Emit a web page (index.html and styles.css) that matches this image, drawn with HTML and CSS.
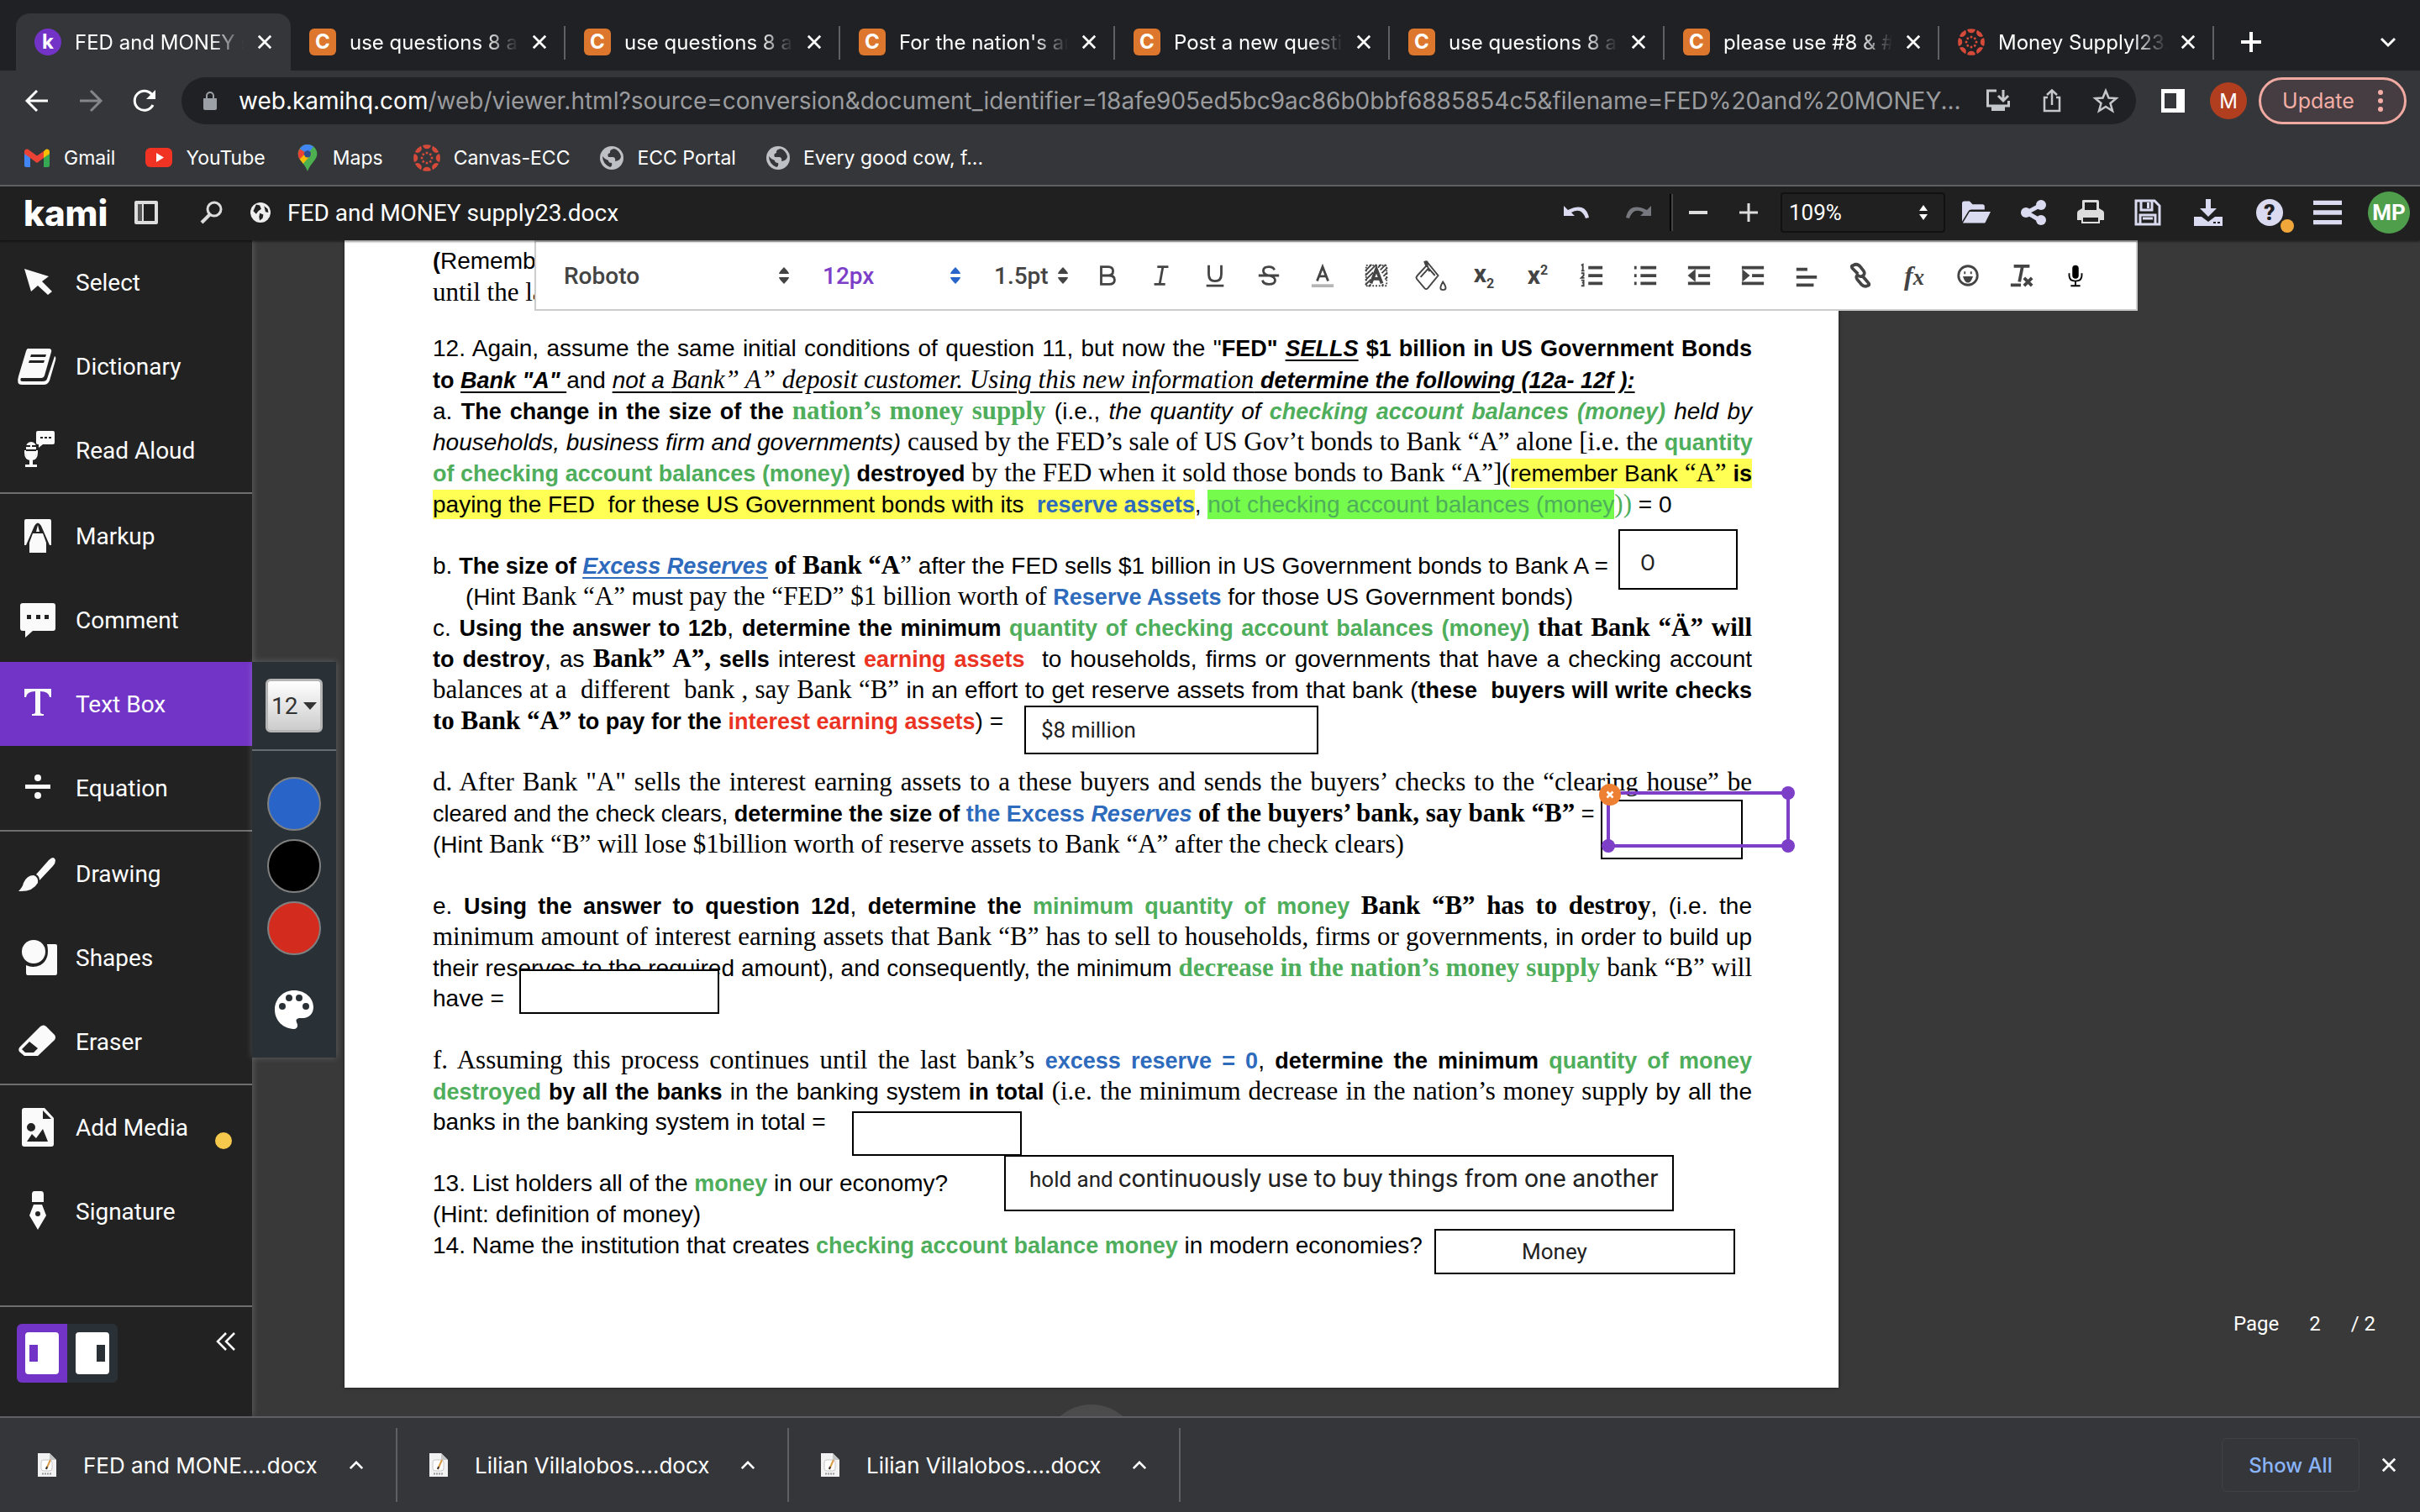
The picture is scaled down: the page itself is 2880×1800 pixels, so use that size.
FILE: index.html
```html
<!DOCTYPE html>
<html lang="en">
<head>
  <meta charset="UTF-8" />
  <meta name="viewport" content="width=device-width, initial-scale=1.0" />
  <title>FED and MONEY supply23.docx</title>
  <link rel="stylesheet" href="styles.css">
</head>

<body>

<!-- Shared icons -->
<svg class="icon-defs" aria-hidden="true">
  <symbol id="i-close" viewBox="0 0 20 20"><path d="M2 2L18 18M18 2L2 18" fill="none" stroke="currentColor" stroke-width="3"/></symbol>
  <symbol id="i-up" viewBox="0 0 20 12"><path d="M2 10L10 2L18 10" fill="none" stroke="currentColor" stroke-width="3"/></symbol>
  <symbol id="i-arrows" viewBox="0 0 12 20"><path d="M0 8Q0 6 6 0Q12 6 12 8ZM0 12H12Q12 14 6 20Q0 14 0 12Z" fill="currentColor"/></symbol>
  <symbol id="i-canvas" viewBox="0 0 32 32">
    <g fill="#d64a3a">
      <g id="petals"><path d="M11 1A15.500 15.500 0 0 1 21 1A5.200 5.800 0 0 1 11 1Z"/><circle cx="16" cy="10" r="1.500"/></g>
      <use href="#petals" transform="rotate(45 16 16)"/><use href="#petals" transform="rotate(90 16 16)"/>
      <use href="#petals" transform="rotate(135 16 16)"/><use href="#petals" transform="rotate(180 16 16)"/>
      <use href="#petals" transform="rotate(225 16 16)"/><use href="#petals" transform="rotate(270 16 16)"/>
      <use href="#petals" transform="rotate(315 16 16)"/>
    </g>
  </symbol>
  <symbol id="i-globe" viewBox="0 0 28 28">
    <circle cx="14" cy="14" r="14" fill="currentColor"/>
    <path d="M17 3Q11 4 12 8Q8 9 10 13H16Q19 14 18 18Q25 17 25 12Q23 5 17 3ZM3 12Q3 21 12 25Q15 24 14 20Q10 20 10 17Q6 16 3 12Z" fill="#35363a"/>
  </symbol>
  <symbol id="i-docx" viewBox="0 0 22 28">
    <path d="M0 0H14L22 8V28H0Z" fill="#f2f2f2"/><path d="M14 0V8H22Z" fill="#c4c4c4"/>
    <rect x="4" y="8" width="13" height="13" rx="3" fill="#fff" stroke="#c8c8c8"/>
    <path d="M15 8L10 19" stroke="#d99b45" stroke-width="2"/><path d="M10 19L11 16" stroke="#333" stroke-width="2"/>
    <path d="M5 24.500H17" stroke="#999" stroke-width="2" stroke-dasharray="2 1"/>
  </symbol>
</svg>

<!-- Tab Strip -->
<div class="tab-strip" role="tablist">
  <div class="tab active" role="tab"><span class="fav kami">k</span><span class="tab-title">FED and MONEY supply</span><button aria-label="Close tab"><svg><use href="#i-close"/></svg></button></div>
  <div class="tab" role="tab"><span class="fav">C</span><span class="tab-title">use questions 8 and 9</span><button aria-label="Close tab"><svg><use href="#i-close"/></svg></button></div>
  <div class="tab" role="tab"><span class="fav">C</span><span class="tab-title">use questions 8 and 9</span><button aria-label="Close tab"><svg><use href="#i-close"/></svg></button></div>
  <div class="tab" role="tab"><span class="fav">C</span><span class="tab-title">For the nation's and</span><button aria-label="Close tab"><svg><use href="#i-close"/></svg></button></div>
  <div class="tab" role="tab"><span class="fav">C</span><span class="tab-title">Post a new question</span><button aria-label="Close tab"><svg><use href="#i-close"/></svg></button></div>
  <div class="tab" role="tab"><span class="fav">C</span><span class="tab-title">use questions 8 and 9</span><button aria-label="Close tab"><svg><use href="#i-close"/></svg></button></div>
  <div class="tab" role="tab"><span class="fav">C</span><span class="tab-title">please use #8 &amp; #9</span><button aria-label="Close tab"><svg><use href="#i-close"/></svg></button></div>
  <div class="tab" role="tab"><svg class="fav-svg"><use href="#i-canvas"/></svg><span class="tab-title">Money Supplyl23.d</span><button aria-label="Close tab"><svg><use href="#i-close"/></svg></button></div>
  <button class="new-tab" aria-label="New tab"><svg viewBox="0 0 24 24"><path d="M12 0V24M0 12H24" stroke="currentColor" stroke-width="4"/></svg></button>
  <button class="tab-search" aria-label="Search tabs"><svg viewBox="0 0 20 12"><path d="M2 2L10 10L18 2" fill="none" stroke="currentColor" stroke-width="3"/></svg></button>
</div>

<!-- Address Bar -->
<div class="nav-bar">
  <button aria-label="Back"><svg viewBox="0 0 28 28"><path d="M27 14H3M14 2L2 14L14 26" fill="none" stroke="#fff" stroke-width="3"/></svg></button>
  <button aria-label="Forward"><svg viewBox="0 0 28 28"><path d="M1 14H25M14 2L26 14L14 26" fill="none" stroke="#85868a" stroke-width="3"/></svg></button>
  <button aria-label="Reload"><svg viewBox="0 0 28 28"><path d="M24 19A11.500 11.500 0 1 1 23 7" fill="none" stroke="#fff" stroke-width="3"/><path d="M27 1V12H16Z" fill="#fff"/></svg></button>
  <div class="omnibox">
    <svg class="lock" viewBox="0 0 16 22"><path d="M0 8H16V20Q16 22 14 22H2Q0 22 0 20Z" fill="#9aa0a6"/><path d="M4 8V5A4 4 0 0 1 12 5V8" fill="none" stroke="#9aa0a6" stroke-width="2"/></svg>
    <label class="host" for="address">web.kamihq.com</label>
    <input id="address" type="text" value="/web/viewer.html?source=conversion&amp;document_identifier=18afe905ed5bc9ac86b0bbf6885854c5&amp;filename=FED%20and%20MONEY...">
    <button aria-label="Install"><svg viewBox="0 0 28 28"><path d="M12 2H1.500V20H26.500V14M20 1V13M14 8L20 14L26 8" fill="none" stroke="#c4c7cb" stroke-width="3"/><path d="M6 20H22V26H6Z" fill="#c4c7cb"/></svg></button>
    <button aria-label="Share"><svg viewBox="0 0 28 28"><path d="M9 10H5V26H23V10H19M14 19V2M8 7L14 1.500L20 7" fill="none" stroke="#c4c7cb" stroke-width="2.500"/></svg></button>
    <button aria-label="Bookmark"><svg viewBox="0 0 28 28"><path d="M14 2L17.500 10.500L26.500 11L19.500 17L22 26L14 21L6 26L8.500 17L1.500 11L10.500 10.500Z" fill="none" stroke="#c4c7cb" stroke-width="2.500"/></svg></button>
  </div>
  <button class="side-panel" aria-label="Side panel"><svg viewBox="0 0 28 28"><path fill-rule="evenodd" d="M0 0H28V28H0ZM4 5V23H18V5Z" fill="#fff"/></svg></button>
  <button class="profile">M</button>
  <button class="update">Update <svg viewBox="0 0 6 26"><circle cx="3" cy="3" r="3"/><circle cx="3" cy="13" r="3"/><circle cx="3" cy="23" r="3"/></svg></button>
</div>

<!-- Bookmarks -->
<nav class="bookmarks">
  <a href="#"><svg class="gmail" viewBox="0 0 30 22"><path d="M0 4V20Q0 22 2 22H7V7Z" fill="#4285f4"/><path d="M30 4V20Q30 22 28 22H23V7Z" fill="#34a853"/><path d="M23 3L26 0.500Q30 0 30 4V6L23 11Z" fill="#fbbc04"/><path d="M0 4Q0 0 4 0.500L15 8.500L23 3V11L15 17L7 11L0 6Z" fill="#ea4335"/></svg>Gmail</a>
  <a href="#"><svg viewBox="0 0 32 24"><rect width="32" height="23" rx="6" fill="#f03323"/><path d="M13 6V17L22 11.500Z" fill="#fff"/></svg>YouTube</a>
  <a href="#"><svg class="pin" viewBox="0 0 22 31"><path d="M11 0A11 11 0 0 1 22 11C22 18 14 22 11 31C8 22 0 18 0 11A11 11 0 0 1 11 0Z" fill="#4caf50"/><path d="M11 0A11 11 0 0 0 2 5L11 11L18 2.500A11 11 0 0 0 11 0Z" fill="#4285f4"/><path d="M2 5A11 11 0 0 0 2 17L11 11Z" fill="#ea4335"/><path d="M2 17L6 22L16 11H8Z" fill="#fbbc04"/><circle cx="11" cy="11" r="4" fill="#2c4d8f"/></svg>Maps</a>
  <a href="#"><svg viewBox="0 0 32 32"><use href="#i-canvas"/></svg>Canvas-ECC</a>
  <a href="#"><svg class="globe"><use href="#i-globe"/></svg>ECC Portal</a>
  <a href="#"><svg class="globe"><use href="#i-globe"/></svg>Every good cow, f...</a>
</nav>

<!-- Kami Header -->
<header class="kami-header">
  <span class="logo">kami</span>
  <button class="panel-btn" aria-label="Toggle panel"><svg viewBox="0 0 28 28"><path fill-rule="evenodd" d="M0 2Q0 0 2 0H26Q28 0 28 2V26Q28 28 26 28H2Q0 28 0 26ZM11 4V24H24V4Z" fill="#ddd"/><path d="M4 4H9V24H4Z" fill="#555"/></svg></button>
  <button class="search-btn" aria-label="Search"><svg viewBox="0 0 28 28"><circle cx="17" cy="10" r="8" fill="none" stroke="#ddd" stroke-width="3"/><path d="M12 16L2 26" stroke="#ddd" stroke-width="4"/></svg></button>
  <svg class="doc-globe" viewBox="0 0 28 28"><circle cx="14" cy="14" r="14" fill="#eee"/><path d="M8 3L13 4L15 9L11 12L8 16L4 12ZM13 15L18 17L17 22L13 25L12 20ZM19 5L24 9L25 14L21 13Z" fill="#222"/></svg>
  <h1>FED and MONEY supply23.docx</h1>
  <div class="kami-actions">
    <button class="undo" aria-label="Undo"><svg viewBox="0 0 32 20"><path d="M1 2V14H14L10 10Q22 3 27 17L31 16Q27 -3 6 7Z" fill="#dadaf0"/></svg></button>
    <button class="redo" aria-label="Redo"><svg viewBox="0 0 32 20"><path d="M31 2V14H18L22 10Q10 3 5 17L1 16Q5 -3 26 7Z" fill="#77777f"/></svg></button>
    <span class="header-rule"></span>
    <button class="zoom-btn" aria-label="Zoom out"><svg viewBox="0 0 22 22"><path d="M0 11H22" stroke="#ddd" stroke-width="4"/></svg></button>
    <button class="zoom-btn" aria-label="Zoom in"><svg viewBox="0 0 22 22"><path d="M0 11H22M11 0V22" stroke="#ddd" stroke-width="3"/></svg></button>
    <span class="zoom-select"><select aria-label="Zoom level"><option>109%</option></select><svg viewBox="0 0 12 20"><path d="M1 8L6 1L11 8ZM1 12H11L6 19Z" fill="#fff"/></svg></span>
    <button class="tool-btn" aria-label="Open"><svg viewBox="0 0 38 30"><path d="M0 3Q0 0 3 0H10L14 4H27Q30 4 30 7V11H12Q9 11 8 14L0 27Z" fill="#dadaf0"/><path d="M10 14H38L31 28Q30 29 29 29H1Z" fill="#dadaf0"/></svg></button>
    <button class="tool-btn" aria-label="Share"><svg viewBox="0 0 32 32"><path d="M25 7L8 16L25 26" fill="none" stroke="#dadaf0" stroke-width="5"/><circle cx="25" cy="7" r="6" fill="#dadaf0"/><circle cx="7" cy="16" r="6" fill="#dadaf0"/><circle cx="25" cy="25" r="6" fill="#dadaf0"/></svg></button>
    <button class="tool-btn" aria-label="Print"><svg viewBox="0 0 32 32"><path fill-rule="evenodd" d="M6 11V2Q6 1 8 1H24Q26 1 26 3V11L31 14Q32 15 32 17V25H27V29H5V25H0V17Q0 15 1 14ZM9 4V13H23V4ZM7 22V27H25V22Z" fill="#ddd"/></svg></button>
    <button class="tool-btn" aria-label="Save"><svg viewBox="0 0 32 32"><path d="M2 2H24L30 8V30H2ZM8 2V13H21V2M7 30V19H25V30M10 23H22" fill="none" stroke="#dadaf0" stroke-width="3"/><path d="M15 4H18V11H15Z" fill="#dadaf0"/></svg></button>
    <button class="tool-btn download" aria-label="Download"><svg viewBox="0 0 34 32"><path d="M14 0H20V11H27L17 21L7 11H14Z" fill="#dadaf0"/><path fill-rule="evenodd" d="M0 21H9L17 27L25 21H34V32H0ZM23 27V29H26V27ZM28 27V29H31V27Z" fill="#dadaf0"/></svg></button>
    <button class="tool-btn help" aria-label="Help"><span class="help-mark">?</span><span class="dot"></span></button>
    <button class="tool-btn" aria-label="Menu"><svg viewBox="0 0 32 28"><path d="M0 3H32M0 14H32M0 25H32" stroke="#dadaf0" stroke-width="5"/></svg></button>
    <button class="user">MP</button>
  </div>
</header>

<main class="workspace">

  <!-- Tool Sidebar -->
  <aside class="sidebar">
    <div class="tool-group">
      <button class="tool"><svg viewBox="0 0 50 50"><path d="M9 9L38 18L30 24L42 36L37 40L25 29L17 36Z"/></svg>Select</button>
      <button class="tool"><svg viewBox="0 0 50 50"><path fill-rule="evenodd" d="M13 4H38Q42 4 41 8L33 36Q32 39 29 39H5Q3 43 7 43H31Q35 43 36 40L45 13Q47 14 46 18L39 42Q37 47 32 47H6Q-1 47 2 37L11 7Q12 4 13 4ZM17 11L16 14H34L35 11ZM15 18L14 21H32L33 18Z"/></svg>Dictionary</button>
      <button class="tool"><svg viewBox="0 0 50 50"><path d="M25 2H43Q45 2 45 4V16Q45 18 43 18H31L26 22V18Q23 18 23 16V4Q23 2 25 2Z"/><rect x="11" y="15" width="12" height="21" rx="6"/><path d="M10 25V28Q10 36 17 36Q24 36 24 28V25" fill="none" stroke="#fafafa" stroke-width="2"/><path d="M15 36H19V42H24V45H10V42H15Z"/><path d="M11 20H16M18 20H23M11 25H23M28 10H31M33 10H36M38 10H41" stroke="#222" stroke-width="2"/></svg>Read Aloud</button>
    </div>
    <div class="tool-group">
      <button class="tool"><svg viewBox="0 0 50 50"><path d="M11 5H39Q41 5 41 7V36H39L29 13Q25 6 21 13L11 36H9V7Q9 5 11 5Z"/><path d="M19 22H31L35 33V45H15V33Z"/><path d="M23 20L25 12L27 20Z"/></svg>Markup</button>
      <button class="tool"><svg viewBox="0 0 50 50"><path fill-rule="evenodd" d="M7 5H43Q46 5 46 8V35Q46 38 43 38H19L10 46V38H7Q4 38 4 35V8Q4 5 7 5ZM12 19V24H17V19ZM23 19V24H28V19ZM33 19V24H38V19Z"/></svg>Comment</button>
      <button class="tool selected"><svg viewBox="0 0 50 50"><path d="M9 7H41V17H39Q38 10 28 10V35Q28 37 32 37V39H18V37Q22 37 22 35V10Q12 10 11 17H9Z"/></svg>Text Box</button>
      <button class="tool"><svg viewBox="0 0 50 50"><path d="M10 21H40V26H10Z"/><circle cx="25" cy="13" r="4"/><circle cx="25" cy="34" r="4"/></svg>Equation</button>
    </div>
    <div class="tool-group">
      <button class="tool"><svg viewBox="0 0 50 50"><path d="M23 26L38 9Q44 3 46 9Q46 13 43 16L27 33Q27 28 23 26ZM20 27Q26 29 25 36Q19 47 2 46Q7 41 8 36Q12 27 20 27Z"/></svg>Drawing</button>
      <button class="tool"><svg viewBox="0 0 50 50"><circle cx="20" cy="18" r="14"/><path d="M36 9H46Q48 9 48 11V43Q48 46 46 46H13Q11 46 11 43V34Q19 38 28 34Q40 27 36 9Z"/></svg>Shapes</button>
      <button class="tool"><svg viewBox="0 0 50 50"><path fill-rule="evenodd" d="M28 7Q32 4 35 7L45 17Q47 20 45 23L25 42H9L3 37Q1 34 4 31ZM15 25L6 34L10 38H20L25 33Z"/></svg>Eraser</button>
    </div>
    <div class="tool-group last">
      <button class="tool"><svg viewBox="0 0 50 50"><path fill-rule="evenodd" d="M9 2H33L44 14V45Q44 48 41 48H9Q6 48 6 45V5Q6 2 9 2ZM31 5V15H41ZM12 42H37L31 27L23 38L18 33ZM17 20A5 5 0 1 0 17 30A5 5 0 1 0 17 20Z"/></svg>Add Media<span class="media-dot"></span></button>
      <button class="tool"><svg viewBox="0 0 50 50"><path d="M21 1H29Q32 1 32 5V14H18V5Q18 1 21 1Z"/><path fill-rule="evenodd" d="M20 17H30L35 30L25 47L15 30ZM25 25A3 3 0 1 0 25 31A3 3 0 1 0 25 25Z"/></svg>Signature</button>
    </div>
    <div class="sidebar-foot">
      <div class="dock">
        <button class="dock-left on" aria-label="Dock left"><svg viewBox="0 0 40 50"><path fill-rule="evenodd" d="M4 0H36Q40 0 40 4V46Q40 50 36 50H4Q0 50 0 46V4Q0 0 4 0ZM5 15V35H15V15Z" fill="#fff"/></svg></button>
        <button class="dock-right" aria-label="Dock right"><svg viewBox="0 0 40 50"><path fill-rule="evenodd" d="M4 0H36Q40 0 40 4V46Q40 50 36 50H4Q0 50 0 46V4Q0 0 4 0ZM25 15V35H35V15Z" fill="#fff"/></svg></button>
      </div>
      <button class="collapse" aria-label="Collapse"><svg viewBox="0 0 22 22"><path d="M11 1L1 11L11 21M21 1L11 11L21 21" fill="none" stroke="#fff" stroke-width="2.500"/></svg></button>
    </div>
  </aside>

  <!-- Text Box Options -->
  <div class="options">
    <div class="size-row"><span class="size-select"><select aria-label="Text size"><option>12</option></select><svg viewBox="0 0 16 9"><path d="M0 0H16L8 9Z" fill="#333"/></svg></span></div>
    <div class="swatches">
      <button class="swatch blue-swatch" aria-label="Blue"></button>
      <button class="swatch black-swatch" aria-label="Black"></button>
      <button class="swatch red-swatch" aria-label="Red"></button>
    </div>
    <button class="palette" aria-label="More colours"><svg viewBox="0 0 46 46"><path fill-rule="evenodd" d="M23 0C36 0 46 9 46 20C46 28 40 33 34 33H29Q24 34 26 38Q29 44 24 46C10 46 0 36 0 23C0 10 10 0 23 0ZM9 15A4 4 0 1 0 9 23A4 4 0 1 0 9 15ZM17 5A4 4 0 1 0 17 13A4 4 0 1 0 17 5ZM29 5A4 4 0 1 0 29 13A4 4 0 1 0 29 5ZM37 15A4 4 0 1 0 37 23A4 4 0 1 0 37 15Z" fill="#fff"/></svg></button>
  </div>

  <!-- Document -->
  <div class="viewer">
    <article class="page">
      <p class="lead">
        <span class="line end"><b>(</b>Remember, this process continues</span>
        <span class="line end serif">until the last bank</span>
      </p>
      <p>
        <span class="line">12. Again, assume the same initial conditions of question 11, but now the "<b>FED" <i class="u">SELLS</i> $1 billion in US Government Bonds</b></span>
        <span class="line end"><b>to <i class="u">Bank "A" </i></b>and <i class="u">not a <span class="serif">Bank” A” deposit customer. Using this new information</span> <b>determine the following (12a- 12f ):</b></i></span>
        <span class="line">a. <b>The change in the size of the <span class="serif green">nation’s money supply</span></b> (i.e., <i>the quantity of <b class="green">checking account balances (money)</b> held by</i></span>
        <span class="line"><i>households, business firm and governments)</i> <span class="serif">caused by the FED’s sale of US Gov’t bonds to Bank “A” alone [i.e. the</span> <b class="green">quantity</b></span>
        <span class="line"><b><span class="green">of checking account balances (money)</span> destroyed</b> <span class="serif">by the FED when it sold those bonds to Bank “A”](</span><mark>remember Bank <span class="serif">“A”</span> <b>is</b></mark></span>
        <span class="line end"><mark>paying the FED&nbsp; for these US Government bonds with its&nbsp; <b class="blue">reserve assets</b></mark>, <mark class="lime">not checking account balances (money</mark><span class="serif green">))</span> = 0</span>
      </p>
      <p>
        <span class="line end">b. <b>The size of <i class="u blue">Excess Reserves</i> <span class="serif">of Bank “A</span></b><span class="serif">”</span> after the FED sells $1 billion in US Government bonds to Bank A =</span>
        <span class="line end indent">(Hint <span class="serif">Bank “A”</span> must <span class="serif">pay the “FED” $1 billion worth of</span> <b class="blue">Reserve Assets</b> for those US Government bonds)</span>
        <span class="line">c. <b>Using the answer to 12b</b>, <b>determine the minimum <span class="green">quantity of checking account balances (money)</span> <span class="serif">that Bank “Ä” will</span></b></span>
        <span class="line"><b>to destroy</b>, as <b><span class="serif">Bank” A”,</span> sells</b> interest <b class="red">earning assets</b>&nbsp; to households, firms or governments that have a checking account</span>
        <span class="line"><span class="serif">balances at a&nbsp; different&nbsp; bank , say Bank “B”</span> in an effort to get reserve assets from that bank (<b>these&nbsp; buyers will write checks</b></span>
        <span class="line end"><b><span class="serif">to Bank “A”</span> to pay for the <span class="red">interest earning assets</span></b>) =</span>
      </p>
      <p>
        <span class="line serif">d. After Bank "A" sells the interest earning assets to a these buyers and sends the buyers’ checks to the “clearing house” be</span>
        <span class="line end snug">cleared and the check clears, <b>determine the size of <span class="blue">the Excess <i>Reserves</i></span> <span class="serif">of the buyers’ bank, say bank “B”</span></b> =</span>
        <span class="line end">(Hint <span class="serif">Bank “B” will lose $1billion worth of reserve assets to Bank “A” after the check clears)</span></span>
      </p>
      <p>
        <span class="line">e. <b>Using the answer to question 12d</b>, <b>determine the <span class="green">minimum quantity of money</span> <span class="serif">Bank “B” has to destroy</span></b>, (i.e. the</span>
        <span class="line"><span class="serif">minimum amount of interest earning assets that Bank “B” has to sell to households, firms or gover</span>nments, in order to build up</span>
        <span class="line">their reserves to the required amount), and consequently, the minimum <b class="serif green">decrease in the nation’s money supply</b> <span class="serif">bank “B” will</span></span>
        <span class="line end">have =</span>
      </p>
      <p>
        <span class="line"><span class="serif">f. Assuming this process continues until the last bank’s</span> <b><span class="blue">excess reserve = 0</span></b>, <b>determine the minimum <span class="green">quantity of money</span></b></span>
        <span class="line"><b><span class="green">destroyed</span> by all the banks</b> in the banking system <b>in total</b> <span class="serif">(i.e. the minimum decrease in the nation’s money supp</span>ly by all the</span>
        <span class="line end">banks in the banking system in total =</span>
      </p>
      <p>
        <span class="line end">13. List holders all of the <b class="green">money</b> in our economy?</span>
        <span class="line end">(Hint: definition of money)</span>
        <span class="line end">14. Name the institution that creates <b class="green">checking account balance money</b> in modern economies?</span>
      </p>

      <!-- Annotations placed over the page -->
      <input class="answer answer-b" type="text" aria-label="Answer b" value="O">
      <input class="answer answer-c" type="text" aria-label="Answer c" value="$8 million">
      <input class="answer answer-d" type="text" aria-label="Answer d">
      <input class="answer answer-e" type="text" aria-label="Answer e">
      <input class="answer answer-f" type="text" aria-label="Answer f">
      <div class="answer answer-13"><label for="answer13">hold and</label><input id="answer13" type="text" value="continuously use to buy things from one another"></div>
      <input class="answer answer-14" type="text" aria-label="Answer 14" value="Money">
      <div class="selection"><span class="handle ne"></span><span class="handle sw"></span><span class="handle se"></span><button class="remove" aria-label="Delete"><svg viewBox="0 0 20 20"><path d="M3 3L17 17M17 3L3 17" stroke="#fff" stroke-width="5"/></svg></button></div>
    </article>
    <span class="page-knob"></span>
    <div class="page-count"><span>Page</span><span>2</span><span>/ 2</span></div>

    <!-- Format Toolbar -->
    <div class="format-bar">
      <span class="pick font-pick"><select aria-label="Font"><option>Roboto</option></select><svg><use href="#i-arrows"/></svg></span>
      <span class="pick size-pick"><select aria-label="Font size"><option>12px</option></select><svg><use href="#i-arrows"/></svg></span>
      <span class="pick line-pick"><select aria-label="Line width"><option>1.5pt</option></select><svg><use href="#i-arrows"/></svg></span>
      <button aria-label="Bold"><svg viewBox="0 0 32 32"><path d="M8 5H17Q23 5 23 10.500Q23 16 17 16H8ZM8 16H18Q25 16 25 21.500Q25 27 18 27H8Z"/></svg></button>
      <button aria-label="Italic"><svg viewBox="0 0 32 32"><path d="M11 5H25M7 27H21M18 5L14 27"/></svg></button>
      <button aria-label="Underline"><svg viewBox="0 0 32 32"><path d="M8 3V14Q8 23 16 23Q24 23 24 14V3M5 29H27"/></svg></button>
      <button aria-label="Strike"><svg viewBox="0 0 32 32"><path d="M23 9Q22 5 16 5Q9 5 9 10Q9 14 16 16Q24 18 24 22Q24 27 16 27Q9 27 8 22M3 16H29"/></svg></button>
      <button aria-label="Text colour"><svg viewBox="0 0 32 32"><path d="M9 23L16 5L23 23M11 17H21"/><path d="M2 29H30" stroke="#b5b5b5" stroke-width="4"/></svg></button>
      <button aria-label="Background colour"><svg viewBox="0 0 32 32"><path d="M3 3H29V29H3Z" stroke-width="2" stroke-dasharray="2 2"/><path d="M2 10L10 2M2 16L16 2M2 22L12 12M18 6L22 2M2 28L9 21M21 9L28 2M23 13L30 6M25 17L30 12M27 21L30 18M6 30L9 27M23 29L25 27" stroke-width="2"/><path d="M9 26L16 8L23 26M11 20H21" stroke-width="4"/></svg></button>
      <button aria-label="Fill"><svg class="big" viewBox="0 0 40 40"><path d="M13 3Q16 1 17 4L30 20L17 36Q15 38 13 36L3 24Q2 22 4 20L15 8ZM8 22L18 11L26 20M15 3L19 15M36 28Q43 38 36 38Q30 38 36 28Z" stroke-width="2"/></svg></button>
      <button aria-label="Subscript"><span class="script">x<sub>2</sub></span></button>
      <button aria-label="Superscript"><span class="script">x<sup>2</sup></span></button>
      <button aria-label="Numbered list"><svg viewBox="0 0 32 32"><path d="M12 6H30M12 16H30M12 26H30" stroke-width="4"/><path d="M3 3L5 2V10M3 10H7M3 13H6V16L3 19H7M3 22H6V25H4H6V29H3" stroke-width="2"/></svg></button>
      <button aria-label="Bullet list"><svg viewBox="0 0 32 32"><path d="M2 6H5M2 16H5M2 26H5M10 6H30M10 16H30M10 26H30" stroke-width="4"/></svg></button>
      <button aria-label="Outdent"><svg viewBox="0 0 32 32"><path d="M2 6H30M15 16H30M2 26H30" stroke-width="4"/><path d="M10 11L4 16L10 21Z" fill="#444"/></svg></button>
      <button aria-label="Indent"><svg viewBox="0 0 32 32"><path d="M2 6H30M15 16H30M2 26H30" stroke-width="4"/><path d="M4 11L10 16L4 21Z" fill="#444"/></svg></button>
      <button aria-label="Align"><svg viewBox="0 0 32 32"><path d="M3 8H17M3 18H29M3 28H25" stroke-width="4"/></svg></button>
      <button aria-label="Link"><svg viewBox="0 0 32 32"><path d="M13 14L7 8Q3 4 7 3Q12 0 16 5L20 10Q23 14 18 17Q14 18 12 15M19 17L25 24Q29 28 25 29Q21 31 17 27L12 21Q9 17 14 14" stroke-width="4"/></svg></button>
      <button class="fx" aria-label="Formula"><i>f<small>x</small></i></button>
      <button aria-label="Emoji"><svg viewBox="0 0 32 32"><circle cx="16" cy="16" r="12"/><path d="M12 11V14M20 11V14M11 18H21Q19 24 16 24Q13 24 11 18Z" fill="#444" stroke-width="2"/></svg></button>
      <button aria-label="Clear format"><svg viewBox="0 0 32 32"><path d="M6 4H26M17 4L13 24M2 28H15M19 19L29 29M29 19L19 29" stroke-width="4"/></svg></button>
      <button aria-label="Dictate"><svg viewBox="0 0 32 32"><rect x="12" y="3" width="8" height="17" rx="4" fill="#000" stroke="none"/><path d="M8 13V16Q8 23 16 23Q24 23 24 16V13M16 23V29M10 29H22" stroke="#000" stroke-width="2"/></svg></button>
    </div>
  </div>
</main>

<!-- Downloads Bar -->
<footer class="downloads">
  <div class="download-item"><svg class="docx"><use href="#i-docx"/></svg><span>FED and MONE....docx</span><button aria-label="Options"><svg><use href="#i-up"/></svg></button></div>
  <div class="download-item"><svg class="docx"><use href="#i-docx"/></svg><span>Lilian Villalobos....docx</span><button aria-label="Options"><svg><use href="#i-up"/></svg></button></div>
  <div class="download-item"><svg class="docx"><use href="#i-docx"/></svg><span>Lilian Villalobos....docx</span><button aria-label="Options"><svg><use href="#i-up"/></svg></button></div>
  <button class="show-all">Show All</button>
  <button class="close-bar" aria-label="Close"><svg><use href="#i-close"/></svg></button>
</footer>

</body>
</html>
```
FILE: styles.css
```css
/* =========================
   General Page Styling
   ========================= */
* {
  box-sizing: border-box;
}

body {
  margin: 0;
  min-height: 100vh;
  display: flex;
  flex-direction: column;
  background-color: #393939;
  color: #fff;
  font-family: Inter, Roboto, sans-serif;
  font-size: 24px;
}

button,
select,
input {
  font: inherit;
  color: inherit;
  background: none;
  border: none;
  padding: 0;
  margin: 0;
  appearance: none;
  outline: none;
}

button {
  cursor: pointer;
  display: flex;
  align-items: center;
  justify-content: center;
}

svg {
  display: block;
  flex: none;
  overflow: visible;
}

.icon-defs {
  position: absolute;
  width: 0;
  height: 0;
}

/* =========================
   Tab Strip
   ========================= */
.tab-strip {
  display: flex;
  height: 84px;
  padding: 16px 28px 0 19px;
  background-color: #202124;
}

.tab {
  flex: 0 1 327px;
  min-width: 0;
  display: flex;
  align-items: center;
  padding: 0 22px;
  background: linear-gradient(#5f6064, #5f6064) right 15px / 2px 40px no-repeat;
}

.tab.active {
  background: #35363a;
  border-radius: 16px 16px 0 0;
}

.fav {
  width: 32px;
  height: 32px;
  border-radius: 6px;
  background-color: #dd772e;
  font-weight: 700;
  line-height: 32px;
  text-align: center;
}

.fav.kami {
  border-radius: 50%;
  background-color: #7433c7;
}

.fav-svg {
  width: 32px;
  height: 32px;
}

.tab-title {
  flex: 1;
  margin: 0 16px;
  overflow: hidden;
  white-space: nowrap;
  mask-image: linear-gradient(to right, #000 80%, transparent);
}

.tab button svg {
  width: 18px;
  height: 18px;
}

.new-tab {
  width: 88px;
}

.new-tab svg {
  width: 24px;
  height: 24px;
}

.tab-search {
  margin-left: auto;
}

.tab-search svg {
  width: 20px;
  height: 12px;
}

/* =========================
   Address Bar
   ========================= */
.nav-bar {
  display: flex;
  align-items: center;
  height: 72px;
  padding: 0 16px 0 12px;
  background-color: #35363a;
}

.nav-bar button {
  width: 64px;
}

.nav-bar svg {
  width: 28px;
  height: 28px;
}

.omnibox {
  flex: 1;
  display: flex;
  align-items: center;
  height: 56px;
  margin-left: 12px;
  padding: 0 4px 0 26px;
  border-radius: 28px;
  background-color: #202124;
  font-size: 28px;
}

.omnibox .lock {
  width: 16px;
  height: 22px;
  margin-right: 26px;
}

.omnibox input {
  flex: 1;
  min-width: 0;
  color: #9a9b9e;
}

.nav-bar .side-panel {
  width: 88px;
}

.nav-bar .profile {
  width: 44px;
  height: 44px;
  margin-right: 14px;
  border-radius: 50%;
  background-color: #b13f1f;
}

.nav-bar .update {
  width: 176px;
  height: 56px;
  gap: 28px;
  border: 3px solid #f0aaa2;
  border-radius: 28px;
  background-color: #453d42;
  color: #f4aea6;
  font-size: 25px;
}

.nav-bar .update svg {
  width: 6px;
  height: 26px;
  fill: #f4aea6;
}

/* =========================
   Bookmarks
   ========================= */
.bookmarks {
  display: flex;
  align-items: center;
  gap: 36px;
  height: 66px;
  padding: 0 28px;
  border-bottom: 2px solid #5f6064;
  background-color: #35363a;
  font-size: 23px;
}

.bookmarks a {
  display: flex;
  align-items: center;
  gap: 16px;
  color: #fff;
  text-decoration: none;
}

.bookmarks svg {
  width: 32px;
  height: 32px;
}

.bookmarks .gmail {
  height: 22px;
}

.bookmarks .pin {
  width: 28px;
}

.bookmarks .globe {
  width: 28px;
  height: 28px;
  color: #bdc1c6;
}

/* =========================
   Kami Header
   ========================= */
.kami-header {
  position: relative;
  z-index: 3;
  display: flex;
  align-items: center;
  height: 64px;
  padding: 0 12px 2px 28px;
  background-color: #202020;
  box-shadow: 0 2px 2px rgba(0, 0, 0, 0.4);
  font-family: Roboto, sans-serif;
}

.logo {
  width: 132px;
  font-family: Inter, sans-serif;
  font-size: 42px;
  font-weight: 800;
}

.panel-btn,
.search-btn {
  width: 28px;
}

.search-btn {
  margin: 0 32px 0 50px;
}

.panel-btn svg,
.search-btn svg {
  width: 28px;
  height: 28px;
}

.doc-globe {
  width: 24px;
  height: 24px;
}

.kami-header h1 {
  margin: 0 20px;
  font-size: 28px;
  font-weight: 400;
}

.kami-actions {
  margin-left: auto;
  display: flex;
  align-items: center;
}

.undo,
.redo {
  width: 74px;
}

.undo svg,
.redo svg {
  width: 32px;
  height: 20px;
}

.header-rule {
  width: 4px;
  height: 44px;
  background-color: #000;
  border-right: 2px solid #444;
}

.zoom-btn {
  width: 60px;
}

.zoom-btn svg {
  width: 22px;
  height: 22px;
}

.zoom-select {
  display: flex;
  align-items: center;
  width: 196px;
  height: 48px;
  margin: 0 3px 0 8px;
  padding: 0 18px 0 8px;
  border: 2px solid #111;
  border-radius: 4px;
  font-size: 26px;
}

.zoom-select select {
  flex: 1;
}

.zoom-select svg {
  width: 12px;
  height: 20px;
}

.tool-btn {
  position: relative;
  width: 68px;
}

.tool-btn svg {
  width: 34px;
  height: 32px;
}

.tool-btn.download {
  width: 76px;
}

.tool-btn.help {
  width: 70px;
}

.help-mark {
  width: 32px;
  height: 32px;
  border-radius: 50%;
  background-color: #dadaf0;
  color: #202020;
  font-size: 26px;
  font-weight: 900;
  line-height: 32px;
}

.dot {
  position: absolute;
  right: 6px;
  bottom: -8px;
  width: 16px;
  height: 16px;
  border-radius: 50%;
  background-color: #f2a73b;
}

.user {
  width: 50px;
  height: 50px;
  margin-left: 14px;
  border-radius: 50%;
  background-color: #4f9e4c;
  font-size: 26px;
  font-weight: 700;
}

/* =========================
   Sidebar
   ========================= */
.workspace {
  flex: 1;
  display: flex;
  align-items: stretch;
  position: relative;
  overflow: hidden;
  font-family: Roboto, sans-serif;
}

.sidebar {
  flex: none;
  width: 300px;
  display: flex;
  flex-direction: column;
  background-color: #222;
  box-shadow: 0 0 8px rgba(255, 255, 255, 0.25);
}

.tool-group {
  border-bottom: 2px solid #6f6f6f;
}

.tool-group.last {
  flex: 1;
}

.tool {
  position: relative;
  width: 100%;
  height: 100px;
  justify-content: flex-start;
  padding-left: 20px;
  gap: 20px;
  font-size: 28px;
}

.tool.selected {
  background-color: #7134c6;
}

.tool svg {
  width: 50px;
  height: 50px;
  fill: #fafafa;
}

.media-dot {
  position: absolute;
  left: 256px;
  bottom: 24px;
  width: 20px;
  height: 20px;
  border-radius: 50%;
  background-color: #f6c84c;
}

.sidebar-foot {
  display: flex;
  align-items: flex-start;
  justify-content: space-between;
  height: 130px;
  padding: 20px;
}

.dock {
  display: flex;
  border-radius: 6px;
  overflow: hidden;
}

.dock button {
  width: 60px;
  height: 70px;
  background-color: #293136;
}

.dock button.on {
  background-color: #7134c6;
}

.dock svg {
  width: 40px;
  height: 50px;
}

.collapse {
  padding-top: 10px;
}

.collapse svg {
  width: 22px;
  height: 22px;
}

/* =========================
   Text Box Options
   ========================= */
.options {
  position: absolute;
  left: 300px;
  top: 502px;
  z-index: 2;
  width: 100px;
  height: 471px;
  background-color: #293136;
  box-shadow: 0 0 8px rgba(255, 255, 255, 0.2);
}

.size-row {
  height: 106px;
  padding: 20px 16px;
  border-bottom: 2px solid #666c70;
}

.size-select {
  display: flex;
  align-items: center;
  height: 64px;
  padding: 0 4px;
  border: 3px solid #b5b5b5;
  border-radius: 6px;
  background: linear-gradient(#fff, #ccc);
  color: #333;
  font-size: 28px;
}

.size-select select {
  flex: 1;
  min-width: 0;
}

.size-select svg {
  width: 16px;
  height: 9px;
}

.swatches {
  display: flex;
  flex-direction: column;
  align-items: center;
  gap: 10px;
  padding: 31px 0 42px;
}

.swatch {
  width: 64px;
  height: 64px;
  border: 2px solid #808080;
  border-radius: 50%;
}

.blue-swatch { background-color: #2964c8; }
.black-swatch { background-color: #000; }
.red-swatch { background-color: #d32c1f; }

.palette {
  width: 100%;
}

.palette svg {
  width: 46px;
  height: 46px;
}

/* =========================
   Document
   ========================= */
.viewer {
  flex: 1;
  position: relative;
  padding: 0 0 34px 110px;
}

.page {
  position: relative;
  width: 100%;
  max-width: 1778px;
  height: 1366px;
  padding: 6px 103px 0 105px;
  background-color: #fff;
  box-shadow: 0 0 4px rgba(0, 0, 0, 0.5);
  color: #000;
  font-family: "Liberation Sans", Arial, sans-serif;
  font-size: 28px;
}

.page p {
  margin: 0 0 36px;
}

.page .lead {
  margin-bottom: 30px;
}

.page b {
  font-size: 27px;
}

.line {
  display: block;
  height: 37px;
  line-height: 37px;
  white-space: nowrap;
  text-align: justify;
  text-align-last: justify;
}

.line.end {
  text-align-last: left;
}

.line.snug {
  font-size: 27px;
}

.indent {
  padding-left: 39px;
}

.page .serif {
  font-family: "Liberation Serif", "Times New Roman", serif;
  font-size: 31px;
}

.u { text-decoration: underline; text-underline-offset: 4px; }
.green { color: #4fae5b; }
.blue { color: #2e6bbd; }
.red { color: #ea3323; }

.page mark {
  padding: 2px 0;
  background-color: #ffff54;
  color: #000;
}

.page mark.lime {
  background-color: #75fb4c;
  color: #4fae5b;
}

/* Answer boxes */
.answer {
  position: absolute;
  padding: 0 18px;
  border: 2px solid #000;
  background-color: #fff;
  color: #222;
  font-family: Roboto, sans-serif;
  font-size: 26px;
}

.answer-b { left: 1516px; top: 344px; width: 142px; height: 72px; padding: 8px 24px 0; }
.answer-c { left: 809px; top: 554px; width: 350px; height: 58px; }
.answer-d { left: 1495px; top: 666px; width: 169px; height: 71px; }
.answer-e { left: 208px; top: 868px; width: 238px; height: 53px; }
.answer-f { left: 604px; top: 1037px; width: 202px; height: 53px; }
.answer-14 { left: 1297px; top: 1177px; width: 358px; height: 54px; padding-left: 102px; }

.answer-13 {
  left: 785px;
  top: 1089px;
  width: 797px;
  height: 67px;
  display: flex;
  align-items: baseline;
  gap: 6px;
  padding: 8px 0 0 28px;
}

.answer-13 input {
  flex: 1;
  min-width: 0;
  font-size: 30px;
}

.selection {
  position: absolute;
  left: 1502px;
  top: 656px;
  width: 218px;
  height: 67px;
  border: 4px solid #7d3fc8;
}

.handle {
  position: absolute;
  width: 16px;
  height: 16px;
  border-radius: 50%;
  background-color: #7d3fc8;
}

.handle.ne { right: -10px; top: -10px; }
.handle.sw { left: -10px; bottom: -10px; }
.handle.se { right: -10px; bottom: -10px; }

.remove {
  position: absolute;
  left: -13px;
  top: -13px;
  width: 26px;
  height: 26px;
  border-radius: 50%;
  background-color: #ee8033;
}

.remove svg {
  width: 10px;
  height: 10px;
}

.page-knob {
  position: absolute;
  left: 942px;
  top: 1386px;
  width: 114px;
  height: 114px;
  border-radius: 50%;
  background-color: #4b4b4b;
}

.page-count {
  position: absolute;
  right: 53px;
  bottom: 96px;
  display: flex;
  gap: 36px;
}

/* =========================
   Format Toolbar
   ========================= */
.format-bar {
  position: absolute;
  left: 336px;
  top: 0;
  display: flex;
  align-items: center;
  height: 84px;
  padding: 0 40px 0 33px;
  border: 2px solid #ccc;
  background-color: #fff;
  color: #444;
  font-size: 28px;
  font-weight: 500;
}

.pick {
  display: flex;
  align-items: center;
}

.pick select {
  flex: 1;
  min-width: 0;
}

.pick svg {
  width: 12px;
  height: 20px;
}

.font-pick { width: 268px; margin-right: 40px; }
.size-pick { width: 164px; margin-right: 40px; color: #7d3fc8; }
.size-pick svg { color: #2964c8; }
.line-pick { width: 88px; margin-right: 15px; }

.format-bar button {
  width: 64px;
}

.format-bar button svg {
  width: 30px;
  height: 30px;
  fill: none;
  stroke: #444;
  stroke-width: 3;
}

.format-bar button .big {
  width: 38px;
  height: 38px;
}

.script {
  font-size: 30px;
  font-weight: 700;
  line-height: 30px;
}

.script sub,
.script sup {
  font-size: 16px;
  line-height: 16px;
}

.format-bar .fx {
  font-family: "Liberation Serif", serif;
  font-size: 32px;
  font-weight: 700;
}

/* =========================
   Downloads Bar
   ========================= */
.downloads {
  position: relative;
  display: flex;
  align-items: center;
  height: 114px;
  padding: 0 28px 0 7px;
  border-top: 2px solid #5f6064;
  background-color: #35363a;
}

.download-item {
  display: flex;
  align-items: center;
  width: 466px;
  height: 88px;
  padding: 0 38px;
  border-right: 2px solid #5f6064;
  font-size: 26px;
}

.download-item span {
  flex: 1;
  margin-left: 32px;
}

.docx {
  width: 22px;
  height: 28px;
}

.download-item button svg {
  width: 18px;
  height: 11px;
}

.show-all {
  width: 164px;
  height: 64px;
  margin-left: auto;
  border: 1px solid #3f4146;
  border-radius: 6px;
  color: #8ab4f8;
  font-weight: 500;
}

.close-bar {
  margin-left: 26px;
}

.close-bar svg {
  width: 18px;
  height: 18px;
}
```
